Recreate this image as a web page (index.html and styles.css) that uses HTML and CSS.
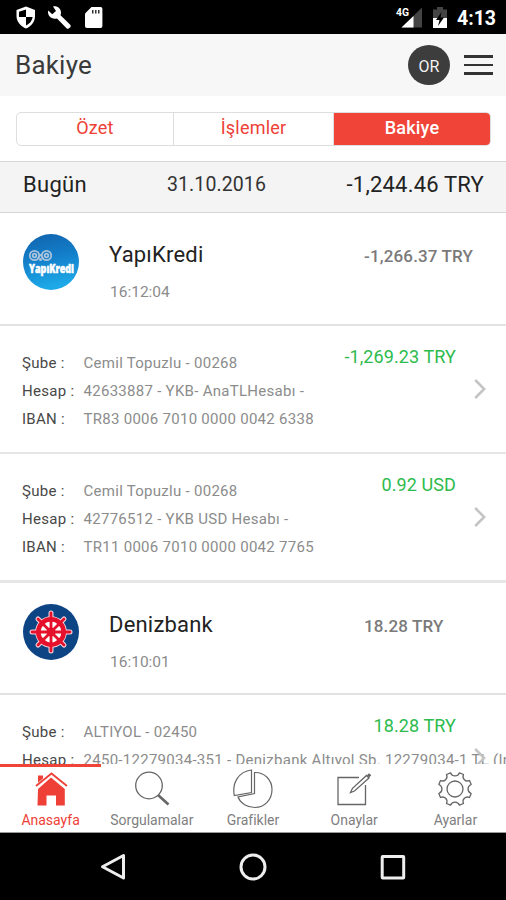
FILE: index.html
```
<!DOCTYPE html>
<html lang="tr">
<head>
    <meta charset="UTF-8">
    <meta name="viewport" content="width=device-width, initial-scale=1.0">
    <title>Bakiye</title>
    <link rel="stylesheet" href="styles.css">
</head>
<body>
    <div class="phone">
        <div class="status-bar">
            <svg width="110" height="34" viewBox="0 0 110 34">
                <path d="M26 6.5 L35 10 V16 C35 22 31 26.5 26 28.5 C21 26.5 16.5 22 16.5 16 V10 Z" fill="#fff"/>
                <path d="M26 9.5 V17 H19 C18.9 15 19 13 19 11.8 Z M26 17 H32.7 C32 21 29.5 24 26 25.5 Z" fill="#000"/>
                <path d="M53 6.5 C57 5.5 61 8.5 61 12.5 C61 13.5 60.8 14.5 60.5 15.3 L70 24.5 C71 25.5 71 26.5 70 27.5 L69 28.3 C68.2 29 67.3 29 66.5 28.2 L57 18.5 C51.5 20 47 15.5 48.2 10.5 L52.2 14.3 L56 11 Z" fill="#fff"/>
                <path d="M91.5 7 H100.5 C101.7 7 102.4 7.8 102.4 9 V26 C102.4 27.2 101.7 28 100.5 28 H87 C85.7 28 85 27.2 85 26 V13.5 Z" fill="#fff"/>
                <path d="M92 10 H93.5 V13.5 H92 Z M95 10 H96.5 V13.5 H95 Z M98 10 H99.5 V13.5 H98 Z" fill="#333"/>
            </svg>
            <svg class="status-right" width="54" height="34" viewBox="395 0 54 34">
                <path d="M422 7.5 V27.5 H401.5 Z" fill="#444"/>
                <path d="M413.5 16 V27.5 H401.5 Z" fill="#fff"/>
                <text class="net-label" x="396" y="16" textLength="13" lengthAdjust="spacingAndGlyphs">4G</text>
                <path d="M433 9.500 H437 V7 H443 V9.5 H447 V18 H433 Z" fill="#444"/>
                <path d="M433 18 H447 V28 H433 Z" fill="#fff"/>
                <path d="M441.5 12 L436 20 H439.5 L438 26 L444 17.5 H440.5 Z" fill="#000"/>
            </svg>
            <span class="clock">4:13</span>
        </div>

        <header class="header">
            <h1>Bakiye</h1>
            <div class="avatar">OR</div>
            <div class="menu-btn">
                <span></span>
                <span></span>
                <span></span>
            </div>
        </header>

        <div class="segment-wrap">
            <div class="segment">
                <div class="segment-item">Özet</div>
                <div class="segment-item">İşlemler</div>
                <div class="segment-item active">Bakiye</div>
            </div>
        </div>

        <div class="day">
            <span class="day-name">Bugün</span>
            <span class="day-date">31.10.2016</span>
            <span class="day-total">-1,244.46 TRY</span>
        </div>

        <main class="list">
            <div class="bank first">
                <svg class="bank-logo" viewBox="0 0 56 56">
                    <defs>
                        <linearGradient id="ykb" x1="0" y1="0" x2="0.2" y2="1">
                            <stop offset="0" stop-color="#1262ad"/>
                            <stop offset="0.5" stop-color="#137fca"/>
                            <stop offset="1" stop-color="#1da9e8"/>
                        </linearGradient>
                    </defs>
                    <circle cx="28" cy="28" r="28" fill="url(#ykb)"/>
                    <g fill="none" stroke="#a9c3dc" stroke-width="1.8">
                        <circle cx="11.5" cy="21.5" r="4.7"/>
                        <circle cx="11.5" cy="21.5" r="1.8"/>
                        <circle cx="23.5" cy="21.5" r="4.7"/>
                        <circle cx="23.5" cy="21.5" r="1.8"/>
                        <path d="M14.5 25 C16 23 16.5 21 17.5 21 C18.5 21 19 23 20.5 25"/>
                    </g>
                    <circle cx="17.5" cy="25.5" r="1.5" fill="#a9c3dc"/>
                    <text class="ykb-text" x="6" y="38.5" textLength="45" lengthAdjust="spacingAndGlyphs">YapıKredi</text>
                </svg>
                <div class="bank-info">
                    <div class="bank-name">YapıKredi</div>
                    <div class="bank-time">16:12:04</div>
                </div>
                <div class="bank-total">-1,266.37 TRY</div>
            </div>

            <div class="account">
                <div class="account-info">
                    <div class="row"><span class="label">Şube :</span><span>Cemil Topuzlu - 00268</span></div>
                    <div class="row"><span class="label">Hesap :</span><span>42633887 - YKB- AnaTLHesabı -</span></div>
                    <div class="row"><span class="label">IBAN :</span><span>TR83 0006 7010 0000 0042 6338</span></div>
                </div>
                <div class="amount">-1,269.23 TRY</div>
                <svg class="chevron" viewBox="0 0 12 20"><path d="M1.2 1 L10.2 10 L1.2 19"/></svg>
            </div>

            <div class="account last">
                <div class="account-info">
                    <div class="row"><span class="label">Şube :</span><span>Cemil Topuzlu - 00268</span></div>
                    <div class="row"><span class="label">Hesap :</span><span>42776512 - YKB USD Hesabı -</span></div>
                    <div class="row"><span class="label">IBAN :</span><span>TR11 0006 7010 0000 0042 7765</span></div>
                </div>
                <div class="amount">0.92 USD</div>
                <svg class="chevron" viewBox="0 0 12 20"><path d="M1.2 1 L10.2 10 L1.2 19"/></svg>
            </div>

            <div class="bank">
                <svg class="bank-logo" viewBox="0 0 56 56">
                    <defs>
                        <g id="spokes">
                            <path d="M28 9 V47"/>
                            <path d="M9 28 H47"/>
                            <path d="M15 15 L41 41"/>
                            <path d="M41 15 L15 41"/>
                        </g>
                    </defs>
                    <circle cx="28" cy="28" r="28" fill="#0c4484"/>
                    <use href="#spokes" stroke="#f6d5dc" stroke-width="5" stroke-linecap="round"/>
                    <circle cx="28" cy="28" r="15.8" fill="#f6d5dc"/>
                    <circle cx="28" cy="28" r="12" fill="#fff"/>
                    <use href="#spokes" stroke="#e5112c" stroke-width="2.8" stroke-linecap="round"/>
                    <circle cx="28" cy="28" r="12.7" fill="none" stroke="#e5112c" stroke-width="4.6"/>
                    <circle cx="28" cy="28" r="4.6" fill="#e5112c"/>
                </svg>
                <div class="bank-info">
                    <div class="bank-name">Denizbank</div>
                    <div class="bank-time">16:10:01</div>
                </div>
                <div class="bank-total">18.28 TRY</div>
            </div>

            <div class="account">
                <div class="account-info">
                    <div class="row"><span class="label">Şube :</span><span>ALTIYOL - 02450</span></div>
                    <div class="row"><span class="label">Hesap :</span><span>2450-12279034-351 - Denizbank Altıyol Şb. 12279034-1 TL (In</span></div>
                </div>
                <div class="amount">18.28 TRY</div>
                <svg class="chevron" viewBox="0 0 12 20"><path d="M1.2 1 L10.2 10 L1.2 19"/></svg>
            </div>
        </main>

        <nav class="tabs">
            <div class="tab active">
                <svg viewBox="0 0 40 40">
                    <path d="M7 20 L20 8.5 L33.8 20 V36.5 H25 V26.5 H15.5 V36.5 H6.5 Z" fill="#ee4036"/>
                    <path d="M7 6.5 H12 V11 L7 15.5 Z" fill="#ee4036"/>
                    <path d="M5 18 L20.5 4.8 L36 18" fill="none" stroke="#fff" stroke-width="4"/>
                    <path d="M5 17 L20.5 4.5 L36 17" fill="none" stroke="#ee4036" stroke-width="1.8"/>
                </svg>
                <span>Anasayfa</span>
            </div>
            <div class="tab">
                <svg viewBox="0 0 40 40" fill="none" stroke="#666">
                    <circle cx="17" cy="16.5" r="13.3" stroke-width="1.3"/>
                    <path d="M26 26 L36.5 35.5" stroke-width="2.6"/>
                </svg>
                <span>Sorgulamalar</span>
            </div>
            <div class="tab">
                <svg viewBox="0 0 40 40" fill="none" stroke="#666" stroke-width="1.2">
                    <path d="M18.5 1 V23.5 L1.3 26.5 C-1.2 13.5 6 2.5 18.5 1 Z"/>
                    <path d="M21.5 3.5 C31.5 3 39 11 39 20.5 C39 31 31.5 38.5 22 38.5 C14.5 38.5 7.5 34.5 5 28 L21.5 24.5 Z"/>
                </svg>
                <span>Grafikler</span>
            </div>
            <div class="tab">
                <svg viewBox="0 0 40 40" fill="none" stroke="#666" stroke-width="1.3">
                    <path d="M25 8.5 H4 V35.500 H31.5 V16"/>
                    <path d="M16.5 23.5 L18.5 19.3 L32.5 6.5 L35 9 L20.5 22 Z"/>
                    <path d="M34 5.2 L36.2 7.4" stroke-width="3"/>
                </svg>
                <span>Onaylar</span>
            </div>
            <div class="tab">
                <svg viewBox="0 0 40 40" fill="none" stroke="#666" stroke-width="1.3">
                    <circle cx="20" cy="20" r="8"/>
                    <path d="M15.5 3.8 C17 8 23 8 24.5 3.8 L28.5 5.5 C26.7 9.5 30.5 13.3 34.5 11.5 L36.2 15.5 C32 17 32 23 36.2 24.5 L34.5 28.5 C30.5 26.7 26.7 30.5 28.5 34.5 L24.5 36.2 C23 32 17 32 15.5 36.2 L11.5 34.5 C13.3 30.5 9.5 26.7 5.5 28.5 L3.8 24.5 C8 23 8 17 3.8 15.5 L5.5 11.5 C9.5 13.3 13.3 9.5 11.5 5.5 Z" stroke-linejoin="round"/>
                </svg>
                <span>Ayarlar</span>
            </div>
        </nav>

        <div class="android-nav">
            <svg viewBox="0 0 28 30"><path d="M24.5 3.5 V26 L3.5 14.8 Z"/></svg>
            <svg viewBox="0 0 28 30"><circle cx="14" cy="15" r="12"/></svg>
            <svg viewBox="0 0 28 30"><rect x="3.2" y="4.5" width="21.5" height="21.5" rx="0.5"/></svg>
        </div>
    </div>
</body>
</html>
```
FILE: styles.css
```
* {
    box-sizing: border-box;
}
body {
    margin: 0;
    font-family: Roboto, sans-serif;
    background: #fff;
    color: #222;
}
.phone {
    width: 506px;
    height: 900px;
    display: flex;
    flex-direction: column;
    overflow: hidden;
}

/* status bar */
.status-bar {
    height: 34px;
    flex: none;
    display: flex;
    align-items: center;
    background: #000;
    color: #fff;
}
.status-right {
    margin-left: auto;
}
.net-label {
    font-size: 11px;
    font-weight: 700;
    fill: #fff;
}
.clock {
    width: 57px;
    padding: 2px 0 0 8px;
    font-size: 19.5px;
    font-weight: 700;
}

/* header */
.header {
    height: 62px;
    flex: none;
    display: flex;
    align-items: center;
    padding: 0 13px 0 15px;
    background: #f7f7f7;
}
.header h1 {
    margin: 0;
    padding-bottom: 1px;
    flex: 1;
    font-size: 26px;
    font-weight: 400;
    line-height: 30px;
    letter-spacing: 0.2px;
    color: #3a3a3a;
}
.avatar {
    width: 42px;
    height: 40px;
    margin-right: 14px;
    padding-top: 2px;
    border-radius: 50%;
    background: #3d3d3d;
    color: #f2f2f2;
    font-size: 16px;
    line-height: 40px;
    text-align: center;
}
.menu-btn {
    width: 29px;
    display: flex;
    flex-direction: column;
    gap: 6px;
}
.menu-btn span {
    height: 2.5px;
    background: #333;
}

/* segment control */
.segment-wrap {
    height: 65px;
    flex: none;
    padding: 16px 15px 0 16px;
}
.segment {
    height: 34px;
    display: flex;
    border: 1px solid #dedede;
    border-radius: 5px;
    overflow: hidden;
}
.segment-item {
    width: 157px;
    border-right: 1px solid #dedede;
    color: #ee4036;
    font-size: 18px;
    line-height: 30px;
    text-align: center;
    letter-spacing: 0.2px;
}
.segment-item:nth-child(2) {
    width: 160px;
}
.segment-item.active {
    flex: 1;
    border: none;
    background: #f04438;
    color: #fff;
    font-weight: 500;
}

/* day summary */
.day {
    height: 52px;
    flex: none;
    display: flex;
    align-items: center;
    padding: 0 22px 6px 23px;
    border-top: 1px solid #d6d6d6;
    border-bottom: 1px solid #d6d6d6;
    background: #f4f4f4;
}
.day-name {
    width: 144px;
    font-size: 22px;
    letter-spacing: 0.3px;
}
.day-date {
    font-size: 19.5px;
    letter-spacing: 0.1px;
    color: #333;
}
.day-total {
    margin-left: auto;
    font-size: 22px;
    letter-spacing: 0.2px;
}

/* banks and accounts */
.list {
    height: 551px;
    flex: none;
    overflow: hidden;
}
.bank {
    height: 112px;
    display: flex;
    align-items: flex-start;
    padding: 21px 0 0 23px;
    border-bottom: 2px solid #e2e2e2;
}
.bank.first {
    height: 113px;
}
.bank-logo {
    width: 56px;
    height: 56px;
}
.ykb-text {
    font-family: "Open Sans", sans-serif;
    font-size: 11.5px;
    font-weight: 800;
    fill: #fff;
    stroke: #fff;
    stroke-width: 0.5;
}
.bank-info {
    width: 255px;
    padding: 7px 0 0 30px;
}
.bank-name {
    font-size: 22px;
    line-height: 28px;
    letter-spacing: 0.2px;
}
.bank-time {
    margin-top: 13px;
    padding-left: 1px;
    font-size: 15.5px;
    line-height: 20px;
    color: #8c8c8c;
}
.bank-total {
    padding-top: 12px;
    margin-left: 30px;
    font-size: 17px;
    font-weight: 500;
    line-height: 20px;
    letter-spacing: 0.15px;
    color: #7a7a7a;
}
.account {
    position: relative;
    height: 128px;
    padding: 22px 0 0 22px;
    border-bottom: 2px solid #e6e6e6;
}
.account.last {
    height: 129px;
    border-bottom-width: 3px;
}
.account-info {
    padding-top: 0.5px;
}
.row {
    display: flex;
    height: 28px;
    font-size: 15px;
    line-height: 28px;
    letter-spacing: 0.28px;
    white-space: nowrap;
    color: #8c8c8c;
}
.label {
    width: 61.5px;
    flex: none;
    color: #484848;
}
.amount {
    position: absolute;
    top: 20px;
    right: 50px;
    font-size: 18px;
    line-height: 22px;
    letter-spacing: 0.1px;
    color: #2dbb4d;
}
.chevron {
    position: absolute;
    top: 53px;
    right: 20px;
    width: 12px;
    height: 20px;
    fill: none;
    stroke: #c4c4c4;
    stroke-width: 2.5;
}

/* bottom tabs */
.tabs {
    height: 69px;
    flex: none;
    display: flex;
    border-bottom: 1px solid #999;
    background: #fff;
}
.tab {
    flex: 1;
    display: flex;
    flex-direction: column;
    align-items: center;
    padding-top: 5px;
    border-top: 3px solid transparent;
    color: #808080;
    font-size: 14px;
    line-height: 16px;
}
.tab.active {
    border-top-color: #f04438;
    color: #ee4036;
}
.tab svg {
    width: 40px;
    height: 40px;
    margin-top: -3px;
    margin-bottom: 3px;
}

/* android navigation */
.android-nav {
    flex: 1;
    display: flex;
    justify-content: center;
    align-items: center;
    gap: 112px;
    background: #000;
}
.android-nav svg {
    width: 28px;
    height: 30px;
    fill: none;
    stroke: #eee;
    stroke-width: 3;
    stroke-linejoin: round;
}
```
